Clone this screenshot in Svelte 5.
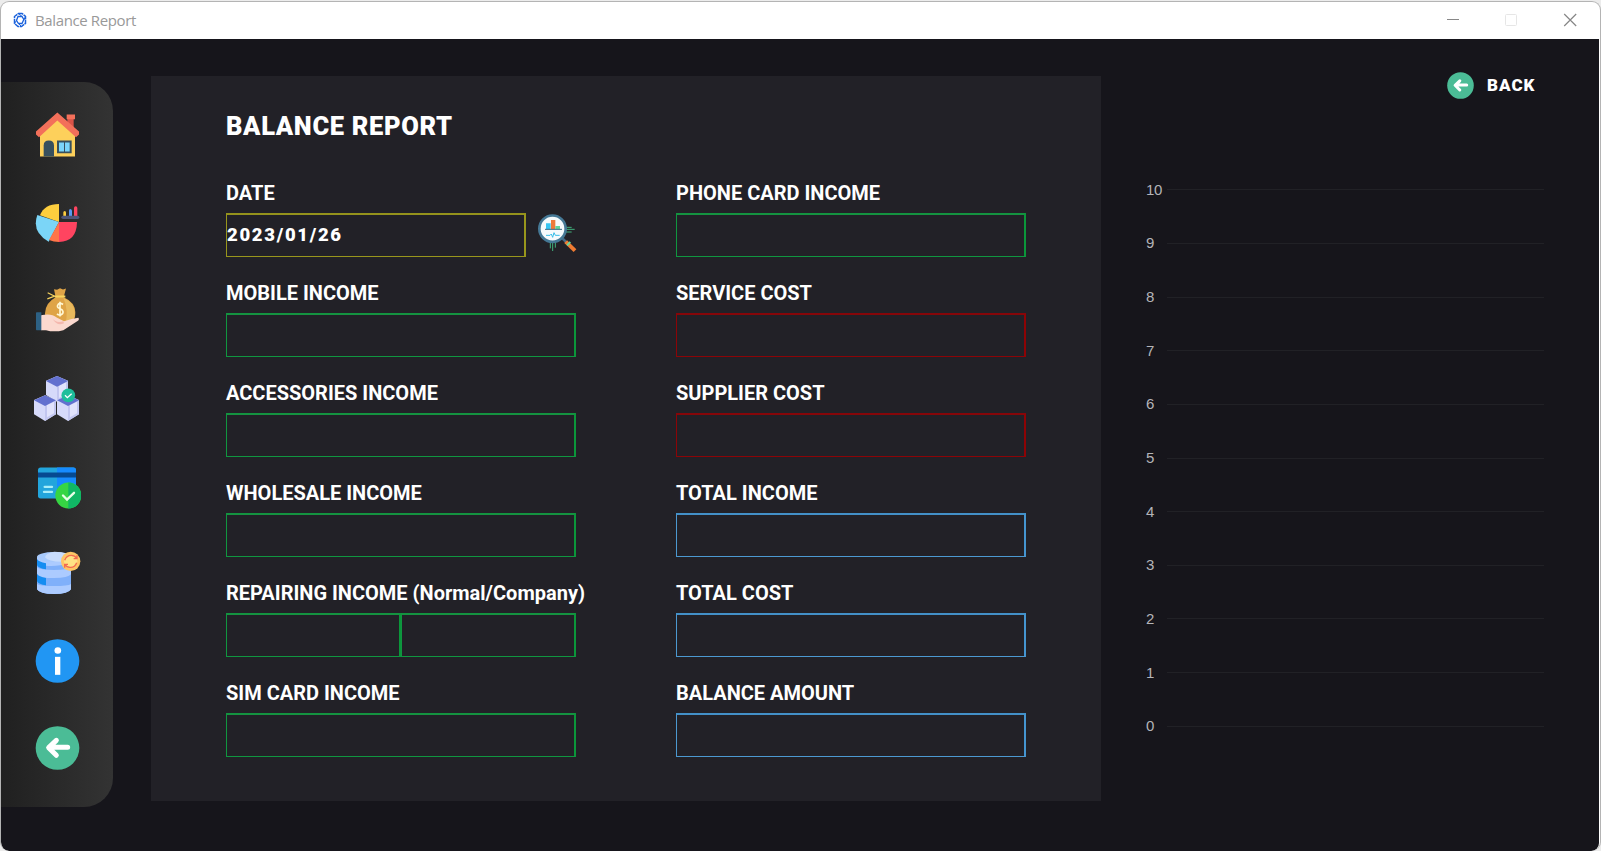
<script>
  const incomeFields = [
    { label: 'MOBILE INCOME', tone: 'green' },
    { label: 'ACCESSORIES INCOME', tone: 'green' },
    { label: 'WHOLESALE INCOME', tone: 'green' },
    { label: 'REPAIRING INCOME (Normal/Company)', tone: 'green', split: true },
    { label: 'SIM CARD INCOME', tone: 'green' }
  ];
  const totalFields = [
    { label: 'PHONE CARD INCOME', tone: 'green' },
    { label: 'SERVICE COST', tone: 'red' },
    { label: 'SUPPLIER COST', tone: 'red' },
    { label: 'TOTAL INCOME', tone: 'blue' },
    { label: 'TOTAL COST', tone: 'blue' },
    { label: 'BALANCE AMOUNT', tone: 'blue' }
  ];
  const ticks = [10, 9, 8, 7, 6, 5, 4, 3, 2, 1, 0];
</script>

{#snippet arrow()}
  <circle cx="112.5" cy="369" r="65.5" fill="#4bbc96" />
  <path d="M143 367H88M109 346L86 368L109 391" fill="none" stroke="#fff" stroke-width="15" stroke-linecap="round" stroke-linejoin="round" />
{/snippet}

<div class="window">
  <header>
    <svg class="logo" viewBox="0 0 14 16" fill="none" stroke="#1b62dc">
      <path d="M5.500 1.500H9l3.500 2.800v7L8.500 14.500H5L1.500 11.500V4.500z" stroke-width="1.500" stroke-dasharray="5 .6" />
      <path d="M5 4.500h4l1.800 3-1.800 4H5.500L3.500 8.500z" stroke-width="1.300" />
      <path d="M5.500 1.500L9 4.500M12.500 4.500L10.800 8M8.500 14.500L5.500 11.500M1.500 11.500l2-3" stroke-width="1" />
    </svg>
    <span class="caption">Balance Report</span>
    <svg class="controls" viewBox="0 0 132 14" fill="none">
      <path d="M0 6.5h12" stroke="#888" />
      <rect x="58.5" y="1.5" width="11" height="11" rx="1" stroke="#e6e6e6" />
      <path d="M117.2 1l12 12M129.2 1l-12 12" stroke="#888" stroke-width="1.2" />
    </svg>
  </header>

  <main>
    <nav>
      <svg viewBox="39 34.5 144 144">
        <path d="M142 57h19v35l-19-18z" fill="#d95348" />
        <path d="M140 45h25v14h-25z" fill="#f3705a" />
        <path d="M60 100L112 54l53 46v71H60z" fill="#fdd05b" />
        <path d="M112 39L48 96v9l9 8 55-50 56 50 9-8v-9z" fill="#f3705a" />
        <path d="M71 171v-33q0-15 15.500-15t15.500 15v33z" fill="#38505e" />
        <path d="M111 123h44v38h-44z" fill="#38505e" />
        <path d="M117 129h15v27h-15zM135 129h14v27h-14z" fill="#7bd5fa" />
      </svg>
      <svg viewBox="39 297 144 144">
        <path d="M117 366V312q-44 0-57 34z" fill="#fdce3e" />
        <path d="M117 366L52 345q-18 50 34 80z" fill="#7bd5f7" />
        <path d="M117 366L87 420q14 6 30 6z" fill="#ff7549" />
        <path d="M117 366h54q-1 59-54 60z" fill="#ff4460" />
        <path d="M130 348v-10q0-5 4-5t4 5v10z" fill="#fdce3e" />
        <path d="M147 348v-16q0-5 4-5t5 5v16z" fill="#5999f2" />
        <path d="M162 348v-24q0-5 5-5t5 5v24z" fill="#ff4460" />
        <rect x="124" y="347" width="54" height="10" rx="5" fill="#4d5578" />
      </svg>
      <svg viewBox="39 34.5 144 144">
        <path d="M107 68L102 44l9 2 9-5 9 4 9-3-7 26q34 15 35 45 1 34-33 40H94q-20-12-19-37 1-31 32-48z" fill="#dfa447" />
        <path d="M130 70q34 16 35 46 0 29-30 36 13-42-5-82z" fill="#e8b95d" />
        <path d="M104 66h32" fill="none" stroke="#f8d45e" stroke-width="6" />
        <path d="M83 55l21 10-22 8" fill="none" stroke="#f8d45e" stroke-width="3.500" />
        <path d="M129 90q-8-6-14-1-7 9 4 13l8 5q6 9-4 14-7 2-12-3M120 82v44" fill="none" stroke="#fff8d5" stroke-width="5" />
        <path d="M63 122q31-7 47 7l22 11q24-8 43-10 4 3 0 8l-45 29q-27 7-52 0H63z" fill="#fbd9cf" />
        <path d="M97 132q12 15 33 8l2 6q-20 11-35-14z" fill="#f4b8ae" />
        <path d="M48 115q0-2 2-2h14v54H50q-2 0-2-2z" fill="#2d6184" />
      </svg>
      <svg viewBox="39 297 144 144">
        {#each [[111, 303], [75, 361], [144, 361]] as [x, y]}
          <g transform={`translate(${x} ${y})`}>
            <path d="M0 0L33 14V57L0 77L-33 57V14z" fill="#d6dafa" />
            <path d="M0 28L33 14V57L0 77z" fill="#c2c6f0" />
            <path d="M6 29L27 19V54L6 66z" fill="#e1e3fc" />
            <path d="M0 0L33 15L0 32L-33 15z" fill="#6270cf" />
          </g>
        {/each}
        <circle cx="145" cy="361" r="20.500" fill="#1dbe9b" />
        <path d="M135 361l7 7 13-12" fill="none" stroke="#fff" stroke-width="4" />
      </svg>
      <svg viewBox="39 34.5 144 144">
        <rect x="54" y="54" width="114" height="93" rx="8" fill="#22a5dc" />
        <path d="M111 54h49q8 0 8 8v77q0 8-8 8h-49z" fill="#168bff" />
        <path d="M54 69h114v15H54z" fill="#064a91" />
        <path d="M74 112h22M72 127h24" stroke="#a7eef9" stroke-width="7" stroke-linecap="round" />
        <circle cx="145" cy="138" r="39" fill="#36d543" />
        <path d="M145 99a39 39 0 0 1 0 78z" fill="#10b765" />
        <path d="M129 138l12 12 21-20" fill="none" stroke="#e7ffe8" stroke-width="7" stroke-linecap="round" />
      </svg>
      <svg viewBox="39 297 144 144">
        <path d="M51 320v98q8 14 51 14t51-14v-98z" fill="#80b0fa" />
        <path d="M51 320v10q8 14 27 17 30 3 75-7v-20zM51 352q8 8 51 8t51-8v21q-8 11-51 11t-51-10zM51 402q8 6 51 6t51-6v16q-8 14-51 14t-51-14z" fill="#accbff" />
        <path d="M51 327q5 9 27 13v18q-22-3-27-12zM51 371q5 9 27 13v22q-22-3-27-12z" fill="#168df1" />
        <ellipse cx="102" cy="321" rx="51" ry="15" fill="#a8cafc" />
        <path d="M75 322q3-14 28-17 25 0 35 5v25q-50 3-63-13z" fill="#c8dcfc" />
        <circle cx="152" cy="334" r="29" fill="#fec565" />
        <circle cx="152" cy="334" r="20" fill="#ffe284" />
        <path d="M134 331q5-15 20-15 10 0 16 9M170 338q-5 15-20 14-10 0-15-8M171 316v10h-10M134 353v-10h10" fill="none" stroke="#f36a50" stroke-width="4" />
      </svg>
      <svg viewBox="39 34.5 144 144">
        <circle cx="112.500" cy="106.500" r="65.500" fill="#2196f3" />
        <circle cx="113.500" cy="75" r="10" fill="#fff" />
        <path d="M105 94h16v54h-16z" fill="#fff" />
      </svg>
      <svg viewBox="39 297 144 144">{@render arrow()}</svg>
    </nav>

    <section class="report">
      <h1>BALANCE REPORT</h1>
      <div class="columns">
        <div class="column">
          <div class="row">
            <span class="label">DATE</span>
            <div class="date-line">
              <div class="field olive date">2023/01/26</div>
              <svg class="search" viewBox="21 24 120 120">
                <path d="M108 67h17M108 73h26M108 81h17M61 112v18M68 112v26M76 112v16" stroke="#42b27d" stroke-width="3" />
                <path d="M98 101l12 12" stroke="#436b88" stroke-width="8" />
                <path d="M107 110l28 27" stroke="#ef7b32" stroke-width="12" />
                <path d="M111 121l10-10" stroke="#65d69b" stroke-width="6" />
                <circle cx="67.500" cy="71" r="39.500" fill="#f5fafc" stroke="#457895" stroke-width="8" />
                <path d="M48 55h14v18H48z" fill="#36c5f2" />
                <path d="M63 45h13v28H63z" fill="#ee7b3b" />
                <path d="M76 63h14v10H76z" fill="#63d59c" />
                <path d="M45 73h51" stroke="#386984" stroke-width="3" />
                <path d="M48 91h12l4-4 4 10 4-14 4 8h13" fill="none" stroke="#35bde9" stroke-width="3" />
              </svg>
            </div>
          </div>
          {#each incomeFields as item}
            <div class="row">
              <span class="label">{item.label}</span>
              {#if item.split}
                <div class="split">
                  <div class="field green"></div>
                  <div class="field green"></div>
                </div>
              {:else}
                <div class="field {item.tone}"></div>
              {/if}
            </div>
          {/each}
        </div>
        <div class="column">
          {#each totalFields as item}
            <div class="row">
              <span class="label">{item.label}</span>
              <div class="field {item.tone}"></div>
            </div>
          {/each}
        </div>
      </div>
    </section>

    <aside>
      <div class="back">
        <svg viewBox="46 302.500 133 133">{@render arrow()}</svg>
        <span>BACK</span>
      </div>
      <div class="chart">
        {#each ticks as tick}
          <div class="tick"><span>{tick}</span><i></i></div>
        {/each}
      </div>
    </aside>
  </main>
</div>

<style>
  :global(body) {
    background: #ececec;
    overflow: hidden;
  }
  .window {
    box-sizing: border-box;
    width: 1601px;
    height: 850px;
    margin-top: 1px;
    border: 1px solid #b4b4b4;
    border-bottom: 0;
    border-radius: 9px;
    overflow: hidden;
    background: #fff;
    display: flex;
    flex-direction: column;
  }
  header {
    height: 37px;
    flex: none;
    box-sizing: border-box;
    display: flex;
    align-items: center;
    padding: 0 21px 1px 12px;
  }
  .logo {
    width: 14px;
    height: 16px;
    margin-right: 8px;
  }
  .caption {
    font: 15px/20px "Open Sans", sans-serif;
    letter-spacing: -0.38px;
    color: #999;
  }
  .controls {
    width: 132px;
    height: 14px;
    margin-left: auto;
  }
  main {
    flex: 1;
    display: flex;
    align-items: flex-start;
    margin-right: 1px;
    background: #16151b;
    border-radius: 0 0 8px 8px;
  }
  nav {
    box-sizing: border-box;
    width: 112px;
    height: 725px;
    margin-top: 43px;
    padding: 29px 0 0 32px;
    border-radius: 0 29px 29px 0;
    background: linear-gradient(90deg, #202020, #333);
    display: flex;
    flex-direction: column;
    gap: 39.6px;
  }
  nav svg {
    width: 48px;
    height: 48px;
    flex: none;
  }
  .report {
    box-sizing: border-box;
    width: 950px;
    height: 725px;
    margin: 37px 0 0 38px;
    padding: 35px 75px 0;
    background: #222127;
    color: #fff;
    font-family: Roboto, sans-serif;
  }
  h1 {
    margin: 0 0 40px;
    font-size: 25.5px;
    line-height: 30px;
    font-weight: 900;
    letter-spacing: 0.65px;
    white-space: nowrap;
  }
  .columns {
    display: flex;
    gap: 100px;
  }
  .column {
    width: 350px;
  }
  .row {
    height: 100px;
  }
  .label {
    display: block;
    height: 32px;
    font-size: 20px;
    line-height: 24px;
    font-weight: 700;
    white-space: nowrap;
  }
  .field {
    box-sizing: border-box;
    height: 44px;
    border-style: solid;
    border-width: 2px 2px 1px 1px;
  }
  .green {
    border-color: #149340 #0b963a #109640 #109640;
  }
  .red {
    border-color: #860609 #8e0305 #8c0407 #8c0407;
  }
  .blue {
    border-color: #4390c8 #4595d0 #4c99d1 #4c99d1;
  }
  .olive {
    border-color: #94921c #98961c #98961c #98961c;
  }
  .split {
    display: flex;
  }
  .split .field {
    width: 175px;
  }
  .date-line {
    display: flex;
    gap: 11px;
  }
  .date {
    flex: none;
    width: 300px;
    font-size: 18.5px;
    line-height: 40px;
    font-weight: 900;
    letter-spacing: 1.7px;
  }
  .search {
    flex: none;
    width: 40px;
    height: 40px;
  }
  aside {
    flex: 1;
  }
  .back {
    margin: 32px 0 0 345.5px;
    display: flex;
    align-items: center;
    gap: 13.5px;
    height: 28px;
    color: #fff;
    font: 900 17px/20px Roboto, sans-serif;
    letter-spacing: 1px;
  }
  .back svg {
    width: 27px;
    height: 27px;
  }
  .chart {
    margin: 63.8px 0 0 45px;
    width: 398px;
  }
  .tick {
    height: 53.65px;
    display: flex;
    align-items: flex-start;
  }
  .tick span {
    width: 21px;
    font: 15px/54px "Liberation Sans", sans-serif;
    letter-spacing: -0.3px;
    color: #b4b4b8;
  }
  .tick i {
    flex: 1;
    height: 1px;
    margin-top: 26.5px;
    background: #212126;
  }
</style>
